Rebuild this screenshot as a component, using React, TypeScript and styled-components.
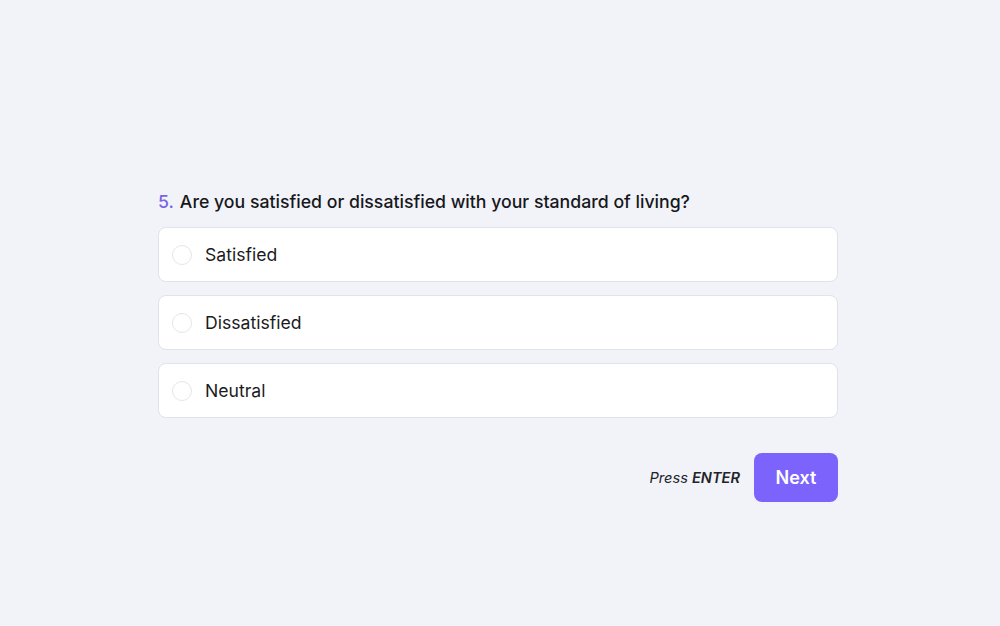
import React from 'react';
import styled, { createGlobalStyle } from 'styled-components';

const GlobalStyle = createGlobalStyle`
  html, body {
    margin: 0;
    padding: 0;
    background: #f1f3f8;
    font-family: Inter, "Noto Sans", sans-serif;
    color: #1b1b22;
  }
`;

const Page = styled.main`
  min-height: 626px;
  display: flex;
  justify-content: center;
  padding: 190px 4px 0 0;
  box-sizing: border-box;
`;

const Form = styled.section`
  width: 680px;
  display: flex;
  flex-direction: column;
`;

const Question = styled.h2`
  margin: 0 0 13px;
  font-size: 17.7px;
  line-height: 24px;
  font-weight: 500;
  color: #17171c;
`;

const Number = styled.span`
  color: #7a63e6;
  margin-right: 6px;
`;

const Options = styled.div`
  display: flex;
  flex-direction: column;
  gap: 13px;
`;

const Option = styled.label`
  height: 55px;
  box-sizing: border-box;
  display: flex;
  align-items: center;
  gap: 13px;
  padding: 0 13px;
  background: #ffffff;
  border: 1px solid #e1e3ea;
  border-radius: 8px;
  font-size: 17.6px;
  color: #1b1b22;
  cursor: pointer;
`;

const Radio = styled.span`
  width: 20px;
  height: 20px;
  box-sizing: border-box;
  border: 1.5px solid #e4e6ec;
  border-radius: 50%;
  background: #fff;
`;

const Footer = styled.div`
  display: flex;
  justify-content: flex-end;
  align-items: center;
  gap: 14px;
  margin-top: 35px;
`;

const Hint = styled.span`
  font-size: 14.6px;
  font-style: italic;
  color: #23232a;

  b {
    font-weight: 600;
  }
`;

const NextButton = styled.button`
  width: 84px;
  height: 49px;
  border: none;
  border-radius: 8px;
  background: #7b63fb;
  color: #fff;
  font-family: inherit;
  font-size: 18px;
  font-weight: 600;
  cursor: pointer;
`;

const options = ['Satisfied', 'Dissatisfied', 'Neutral'];

const App = () => {
  return (
    <>
      <GlobalStyle />
      <Page>
        <Form>
          <Question>
            <Number>5.</Number>Are you satisfied or dissatisfied with your standard of living?
          </Question>
          <Options>
            {options.map(o => (
              <Option key={o}>
                <Radio />
                {o}
              </Option>
            ))}
          </Options>
          <Footer>
            <Hint>Press <b>ENTER</b></Hint>
            <NextButton>Next</NextButton>
          </Footer>
        </Form>
      </Page>
    </>
  );
};

export default App;
